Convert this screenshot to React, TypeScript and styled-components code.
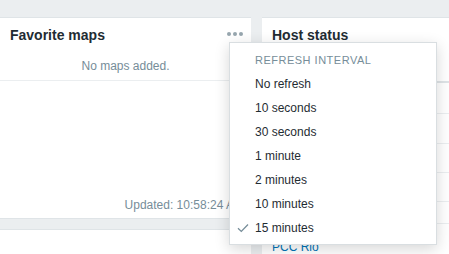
import React from 'react';
import styled, { createGlobalStyle } from 'styled-components';

const GlobalStyle = createGlobalStyle`
  html, body {
    margin: 0;
    padding: 0;
    background: #ebeef0;
    font-family: "Liberation Sans", Arial, sans-serif;
    font-size: 12px;
    color: #1f2c33;
    overflow: hidden;
  }
`;

const Dashboard = styled.div`
  position: relative;
  display: grid;
  grid-template-columns: 251px 1fr;
  column-gap: 11px;
  padding-top: 17px;
  height: 237px;
  overflow: hidden;
`;

const Column = styled.div`
  display: flex;
  flex-direction: column;
  gap: 10px;
  min-width: 0;
`;

const Widget = styled.div<{ $height?: number }>`
  display: flex;
  flex-direction: column;
  background: #fff;
  border-top: 1px solid #dfe4e7;
  border-bottom: 1px solid #dfe4e7;
  height: ${(p) => (p.$height ? `${p.$height}px` : 'auto')};
  flex: ${(p) => (p.$height ? 'none' : '1')};
  box-sizing: border-box;
`;

const WidgetHead = styled.div`
  display: flex;
  align-items: center;
  justify-content: space-between;
  height: 33px;
  padding: 0 8px 0 10px;
  flex: none;
`;

const Title = styled.h4`
  margin: 0;
  font-size: 14px;
  font-weight: bold;
  color: #1f2c33;
`;

const MoreButton = styled.div`
  display: flex;
  gap: 2px;
  margin-top: -2px;
  span {
    width: 4px;
    height: 4px;
    border-radius: 50%;
    background: #97a6ae;
  }
`;

const EmptyRow = styled.div`
  height: 29px;
  display: flex;
  align-items: center;
  justify-content: center;
  color: #768d99;
  border-bottom: 1px solid #ebeef0;
`;

const WidgetBody = styled.div`
  flex: 1;
`;

const Footer = styled.div`
  display: flex;
  justify-content: flex-end;
  align-items: center;
  height: 26px;
  padding: 0 7px;
  color: #768d99;
  white-space: nowrap;
`;

const Table = styled.div`
  display: flex;
  flex-direction: column;
`;

const HeadRow = styled.div`
  height: 30px;
  border-bottom: 2px solid #dfe4e7;
`;

const Row = styled.div<{ $h: number; $pad?: number }>`
  height: ${(p) => p.$h}px;
  display: flex;
  align-items: center;
  padding: ${(p) => p.$pad ?? 0}px 0 0 10px;
  border-bottom: 1px solid #ebeef0;
  box-sizing: border-box;
`;

const Link = styled.span`
  color: #0275b8;
`;

const Menu = styled.div`
  position: absolute;
  left: 229px;
  top: 42px;
  width: 208px;
  box-sizing: border-box;
  background: #fff;
  border: 1px solid #d9dee1;
  box-shadow: 0 4px 14px rgba(0, 0, 0, 0.16);
  padding: 5px 0 4px;
`;

const MenuHeader = styled.div`
  height: 24px;
  display: flex;
  align-items: center;
  padding-left: 25px;
  font-size: 11px;
  letter-spacing: 0.5px;
  text-transform: uppercase;
  color: #768d99;
`;

const MenuItem = styled.div`
  position: relative;
  height: 24px;
  display: flex;
  align-items: center;
  padding-left: 25px;
  color: #1f2c33;
`;

const Check = styled.svg`
  position: absolute;
  left: 7px;
  top: 7px;
`;

const intervals = ['No refresh', '10 seconds', '30 seconds', '1 minute', '2 minutes', '10 minutes', '15 minutes'];
const rowHeights = [31, 30, 29, 29, 22];

const App: React.FC = () => (
  <>
    <GlobalStyle />
    <Dashboard>
      <Column>
        <Widget $height={202}>
          <WidgetHead>
            <Title>Favorite maps</Title>
            <MoreButton>
              <span />
              <span />
              <span />
            </MoreButton>
          </WidgetHead>
          <WidgetBody>
            <EmptyRow>No maps added.</EmptyRow>
          </WidgetBody>
          <Footer>Updated: 10:58:24 AM</Footer>
        </Widget>
        <Widget />
      </Column>
      <Column>
        <Widget>
          <WidgetHead>
            <Title>Host status</Title>
          </WidgetHead>
          <Table>
            <HeadRow />
            {rowHeights.map((h, i) => (
              <Row key={i} $h={h} />
            ))}
            <Row $h={36} $pad={10}>
              <Link>PCC Rio</Link>
            </Row>
          </Table>
        </Widget>
      </Column>
      <Menu>
        <MenuHeader>Refresh interval</MenuHeader>
        {intervals.map((label) => (
          <MenuItem key={label}>
            {label === '15 minutes' && (
              <Check width="12" height="10" viewBox="0 0 12 10">
                <path d="M1 5.2 L4.3 8.4 L11 1.5" fill="none" stroke="#768d99" strokeWidth="1.3" />
              </Check>
            )}
            {label}
          </MenuItem>
        ))}
      </Menu>
    </Dashboard>
  </>
);

export default App;
